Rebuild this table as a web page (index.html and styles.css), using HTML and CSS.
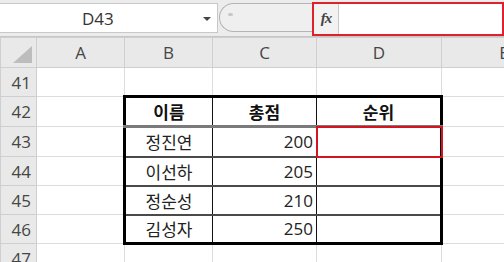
FILE: index.html
```html
<!DOCTYPE html>
<html lang="ko">
<head>
<meta charset="utf-8">
<title>순위</title>
<link rel="stylesheet" href="styles.css">
</head>
<body>
<div class="app">
  <div class="formula-bar">
    <div class="namebox">
      <span class="ref">D43</span>
      <span class="caret"></span>
    </div>
    <div class="pill"><span class="dot"></span></div>
    <div class="fx-box">
      <span class="fx">fx</span>
      <div class="input"></div>
    </div>
  </div>
  <table class="sheet">
    <colgroup>
      <col class="c-head"><col class="c-a"><col class="c-b"><col class="c-c"><col class="c-d"><col class="c-e">
    </colgroup>
    <tr class="col-heads">
      <th class="corner"><span class="tri"></span></th>
      <th>A</th><th>B</th><th>C</th><th>D</th><th>E</th>
    </tr>
    <tr class="r29">
      <th>41</th><td></td><td></td><td></td><td></td><td></td>
    </tr>
    <tr class="r30">
      <th>42</th><td></td>
      <td class="t t-head t-left">이름</td>
      <td class="t t-head">총점</td>
      <td class="t t-head t-right">순위</td>
      <td></td>
    </tr>
    <tr class="r30">
      <th>43</th><td></td>
      <td class="t t-left">정진연</td>
      <td class="t num">200</td>
      <td class="t t-right active"></td>
      <td></td>
    </tr>
    <tr class="r29">
      <th>44</th><td></td>
      <td class="t t-left">이선하</td>
      <td class="t num">205</td>
      <td class="t t-right"></td>
      <td></td>
    </tr>
    <tr class="r29">
      <th>45</th><td></td>
      <td class="t t-left">정순성</td>
      <td class="t num">210</td>
      <td class="t t-right"></td>
      <td></td>
    </tr>
    <tr class="r29">
      <th>46</th><td></td>
      <td class="t t-left t-bottom">김성자</td>
      <td class="t num t-bottom">250</td>
      <td class="t t-right t-bottom"></td>
      <td></td>
    </tr>
    <tr class="r29">
      <th>47</th><td></td><td></td><td></td><td></td><td></td>
    </tr>
  </table>
</div>
</body>
</html>
```

FILE: styles.css
```css
html, body {
  margin: 0;
  padding: 0;
  background: #ffffff;
  overflow: hidden;
}

.app {
  width: 504px;
  height: 262px;
  overflow: hidden;
  font-family: "Open Sans", "Noto Sans", "Noto Sans CJK KR", sans-serif;
  color: #3a3a3a;
  background: #ffffff;
}

/* ---- formula bar ---- */
.formula-bar {
  display: flex;
  align-items: stretch;
  height: 37px;
  box-sizing: border-box;
  padding-top: 3px;
  background: #ececec;
  border-bottom: 1px solid #c6c6c6;
}

.namebox {
  position: relative;
  width: 218px;
  height: 30px;
  box-sizing: border-box;
  background: #ffffff;
  border: 1px solid #c8c8c8;
  border-left: none;
  display: flex;
  align-items: center;
}

.ref {
  margin-left: 82px;
  font-size: 17px;
  color: #333333;
}

.caret {
  position: absolute;
  left: 203px;
  top: 13px;
  width: 0;
  height: 0;
  border-left: 4px solid transparent;
  border-right: 4px solid transparent;
  border-top: 4px solid #444444;
}

.pill {
  width: 93px;
  height: 29px;
  margin-left: 1px;
  box-sizing: border-box;
  border: 1px solid #b4b4b4;
  border-right: none;
  border-radius: 15px 0 0 15px;
  background: #efefef;
  position: relative;
}

.dot {
  position: absolute;
  left: 8px;
  top: 9px;
  width: 5px;
  height: 3px;
  border-radius: 2px;
  background: #c8c8c8;
}

.fx-box {
  flex: 1;
  display: flex;
  margin-top: -1px;
  height: 34px;
  box-sizing: border-box;
  border: 2px solid #e0202a;
  background: #ffffff;
}

.fx {
  width: 25px;
  box-sizing: border-box;
  border-right: 1px solid #c8c8c8;
  background: #f2f2f2;
  font-family: "Liberation Serif", serif;
  font-style: italic;
  font-weight: bold;
  font-size: 15px;
  color: #444444;
  display: flex;
  align-items: center;
  justify-content: center;
  padding-bottom: 2px;
  letter-spacing: -1px;
}

.input {
  flex: 1;
  background: #ffffff;
}

/* ---- grid ---- */
.sheet {
  border-collapse: collapse;
  table-layout: fixed;
  width: 566px;
}

.c-head { width: 36px; }
.c-a { width: 88px; }
.c-b { width: 88px; }
.c-c { width: 104px; }
.c-d { width: 125px; }
.c-e { width: 125px; }

.sheet th,
.sheet td {
  padding: 0;
  border: 1px solid #dcdcdc;
  font-weight: normal;
  overflow: hidden;
  white-space: nowrap;
}

.sheet th {
  background: #e9e9e9;
  color: #464646;
  font-size: 17px;
  border-color: #cfcfcf;
}

.col-heads th {
  height: 29px;
  text-align: center;
}

.corner {
  position: relative;
}

.tri {
  position: absolute;
  right: 4px;
  bottom: 4px;
  width: 0;
  height: 0;
  border-left: 19px solid transparent;
  border-bottom: 17px solid #bdbdbd;
}

.r29 { height: 29px; }
.r30 { height: 30px; }

.sheet tr > th:first-child {
  text-align: right;
  padding-right: 5px;
}

.col-heads > th:first-child {
  padding-right: 0;
}

.sheet td {
  font-family: "Noto Sans CJK KR", "Noto Sans", sans-serif;
  font-size: 17px;
  color: #222222;
  text-align: center;
}

/* bordered data block */
.sheet td.t {
  border: 1px solid #111111;
  border-top: 2px solid #4a4a4a;
}

.sheet td.t-head {
  border-top: 3px solid #000000;
  border-bottom: 3px solid #7a7a7a;
  font-weight: bold;
  color: #111111;
}

.sheet td.t-left { border-left: 3px solid #000000; }
.sheet td.t-right { border-right: 3px solid #000000; }
.sheet td.t-bottom { border-bottom: 3px solid #000000; }

.sheet td.num {
  text-align: right;
  padding-right: 3px;
  font-family: "Open Sans", "Noto Sans", sans-serif;
}

/* active cell frame */
.sheet td.active {
  outline: 2px solid #d4151f;
  outline-offset: -1px;
}
```
